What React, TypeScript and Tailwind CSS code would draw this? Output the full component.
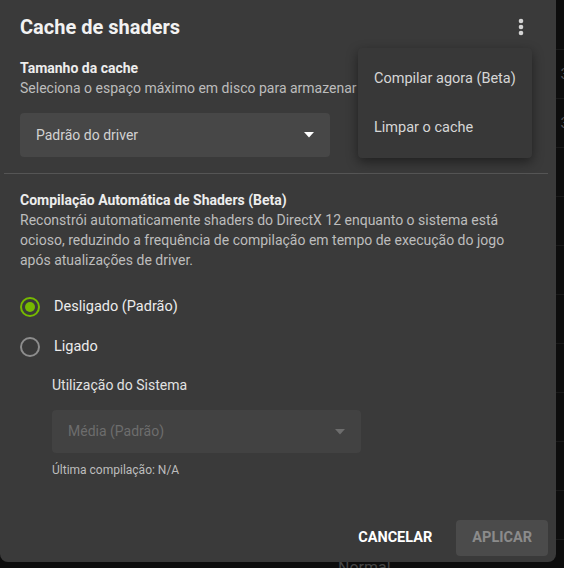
import { useState } from "react";

const rows = ["", "3", "3", "", "", "", "", "", "", "", "", ""];

const Caret = ({ color }: { color: string }) => (
  <svg width="10" height="6" viewBox="0 0 10 6" className="shrink-0">
    <path d="M0 0 L10 0 L5 5.5 Z" fill={color} />
  </svg>
);

const Radio = ({
  checked,
  label,
  onClick,
}: {
  checked: boolean;
  label: string;
  onClick: () => void;
}) => (
  <button onClick={onClick} className="flex items-center h-10 gap-[14px] text-left">
    <span
      className={
        checked
          ? "w-5 h-5 rounded-full border-2 border-[#76b900] flex items-center justify-center"
          : "w-5 h-5 rounded-full border-2 border-[#8d8d8d]"
      }
    >
      {checked && <span className="w-[10px] h-[10px] rounded-full bg-[#76b900]" />}
    </span>
    <span className="text-[14.5px] text-[#ececec]">{label}</span>
  </button>
);

const App = () => {
  const [autoCompile, setAutoCompile] = useState<boolean>(false);

  return (
    <div
      className="relative w-[564px] h-[568px] overflow-hidden bg-[#0d0d0d]"
      style={{ fontFamily: "Roboto, 'Noto Sans', sans-serif" }}
    >
      {/* page behind the dialog */}
      <div className="flex flex-col pt-[1px]">
        {rows.map((r, i) => (
          <div
            key={i}
            className="h-[49px] border-b border-[#1a1a1a] flex items-center justify-end"
          >
            <span className="text-[15px] text-[#4d5055] translate-x-[5px]">{r}</span>
          </div>
        ))}
      </div>
      <div className="absolute left-[338px] top-[556px] text-[16px] text-[#454545]">Normal</div>

      {/* dialog */}
      <div className="absolute left-0 top-0 w-[556px] h-[562px] bg-[#3a3a3a] rounded-b-lg flex flex-col text-[14px]">
        <div className="flex items-center justify-between pl-5 pr-8 pt-[13px] h-[41px]">
          <h1 className="text-[20px] leading-[28px] font-bold text-[#f2f2f2]">Cache de shaders</h1>
          <svg width="6" height="18" viewBox="0 0 6 18">
            <circle cx="3" cy="3" r="2.3" fill="#d4d4d4" />
            <circle cx="3" cy="9" r="2.3" fill="#d4d4d4" />
            <circle cx="3" cy="15" r="2.3" fill="#d4d4d4" />
          </svg>
        </div>

        <div className="px-5 mt-[17px]">
          <p className="leading-5 font-bold text-[#ededed]">Tamanho da cache</p>
          <p className="leading-5 text-[#bdbdbd] whitespace-nowrap">
            Seleciona o espaço máximo em disco para armazenar o cache de shaders
          </p>
          <div className="mt-[15px] w-[310px] h-[44px] rounded bg-[#474747] flex items-center justify-between pl-4 pr-4">
            <span className="text-[#d2d2d2]">Padrão do driver</span>
            <Caret color="#ffffff" />
          </div>
        </div>

        <div className="mt-4 ml-1 mr-2 h-px bg-[#555555]" />

        <div className="px-5 mt-4">
          <p className="leading-5 font-bold text-[#ededed]">Compilação Automática de Shaders (Beta)</p>
          <p className="leading-5 text-[#bdbdbd]">
            Reconstrói automaticamente shaders do DirectX 12 enquanto o sistema está
            <br />
            ocioso, reduzindo a frequência de compilação em tempo de execução do jogo
            <br />
            após atualizações de driver.
          </p>

          <div className="mt-[17px] flex flex-col">
            <Radio checked={!autoCompile} label="Desligado (Padrão)" onClick={() => setAutoCompile(false)} />
            <Radio checked={autoCompile} label="Ligado" onClick={() => setAutoCompile(true)} />
          </div>

          <div className="pl-8 mt-2">
            <p className="leading-5 text-[#e2e2e2]">Utilização do Sistema</p>
            <div className="mt-[15px] w-[309px] h-[43px] rounded bg-[#424242] flex items-center justify-between pl-4 pr-4">
              <span className="text-[#6d6d6d]">Média (Padrão)</span>
              <Caret color="#6d6d6d" />
            </div>
            <p className="mt-[9px] text-[12px] leading-4 text-[#bdbdbd]">Última compilação: N/A</p>
          </div>
        </div>

        <div className="mt-auto flex justify-end items-center gap-3 pr-2 pb-[6px]">
          <button className="h-9 px-3 text-[14.5px] font-bold text-white">CANCELAR</button>
          <button className="h-9 px-4 rounded bg-[#4b4b4b] text-[14.5px] font-bold text-[#8b8b8b]">
            APLICAR
          </button>
        </div>
      </div>

      {/* overflow menu */}
      <div className="absolute left-[358px] top-[48px] w-[174px] h-[110px] rounded bg-[#383838] shadow-[0_4px_12px_rgba(0,0,0,0.45)] flex flex-col pt-[7px] pb-[6px]">
        <div className="h-12 flex items-center px-4 text-[14.5px] text-[#d6d6d6] whitespace-nowrap">
          Compilar agora (Beta)
        </div>
        <div className="h-12 mt-px flex items-center px-4 text-[14.5px] text-[#d6d6d6] whitespace-nowrap">
          Limpar o cache
        </div>
      </div>
    </div>
  );
};

export default App;
